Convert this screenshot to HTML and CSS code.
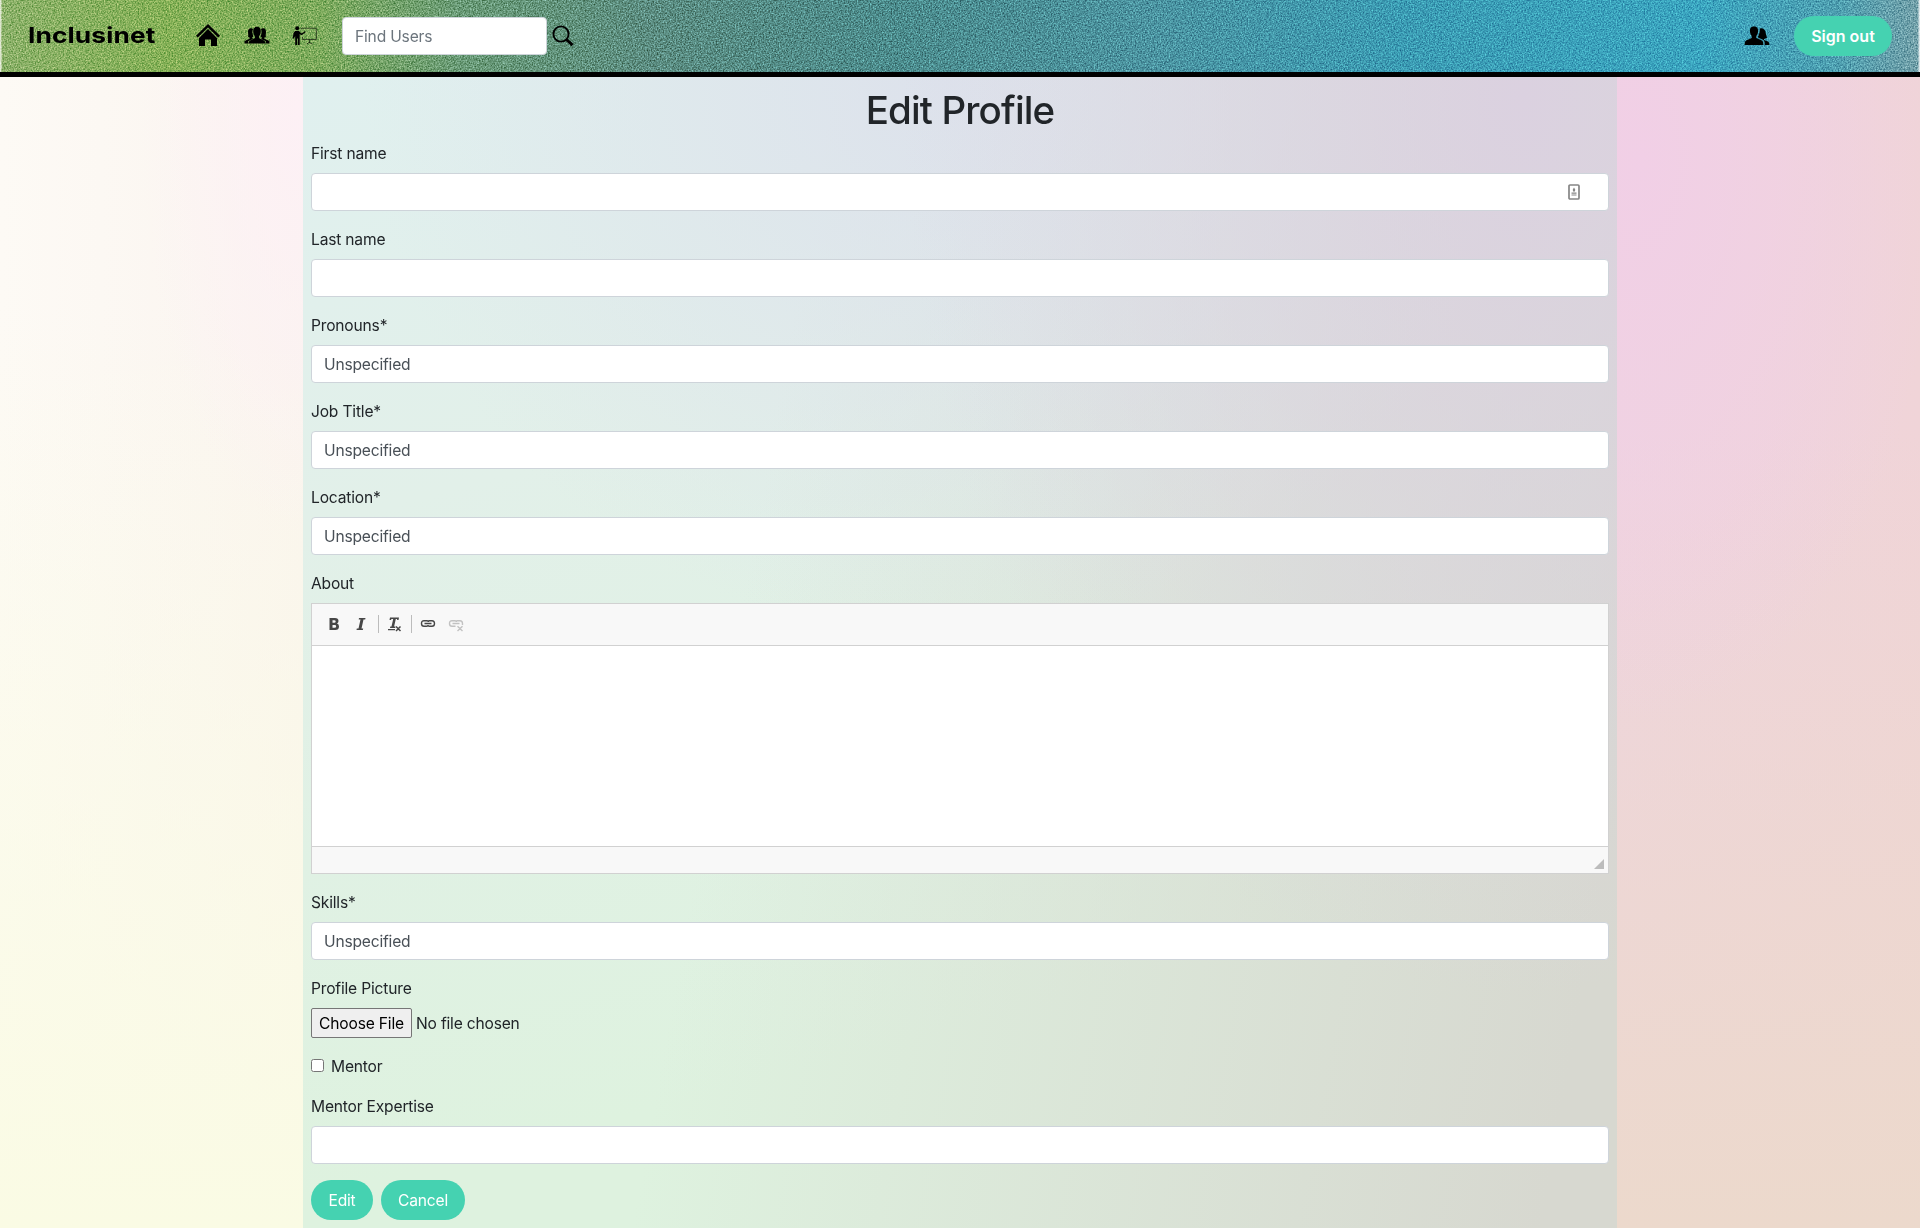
FILE: index.html
```html
<!DOCTYPE html>
<html lang="en">
<head>
<meta charset="utf-8">
<title>Edit Profile - Inclusinet</title>
<link rel="stylesheet" href="styles.css">
</head>
<body>
<header class="navbar">
  <svg class="grain" aria-hidden="true">
    <filter id="grain" x="0" y="0" width="100%" height="100%" color-interpolation-filters="sRGB">
      <feTurbulence type="fractalNoise" baseFrequency="0.68" numOctaves="2" seed="9"/>
      <feColorMatrix values="1.3 0 0 0 -0.15  1.3 0 0 0 -0.15  1.3 0 0 0 -0.15  0 0 0 0 1"/>
    </filter>
    <rect width="100%" height="100%" filter="url(#grain)"/>
  </svg>
  <a class="brand"><span class="brand-text">Inclusinet</span></a>
  <nav class="links">
    <svg width="26" height="24" viewBox="0 0 26 24"><path d="M13 0 25 11.800 23.200 13.600 13 3.600 2.800 13.600 1 11.800Z"/><path d="M13 5 22 14V22H16V15.500H10V22H4V14Z"/></svg>
    <svg width="26" height="20" viewBox="0 0 26 20"><path d="M5.500 2.500C7 1.800 8.500 2.200 9 3 8 5 8.200 8 9.500 10.500L8 11.500C9 12.500 9 13 8 13.500L4 15.200 4.500 17.500H.500V15L5 13C6 12.500 6 12 5.500 11.500L4 11C4.700 9.500 4 8 4 6 4 4.500 4.300 3.200 5.500 2.500ZM20.500 2.500C19 1.800 17.500 2.200 17 3 18 5 17.800 8 16.500 10.500L18 11.500C17 12.500 17 13 18 13.500L22 15.200 21.500 17.500H25.500V15L21 13C20 12.500 20 12 20.500 11.500L22 11C21.300 9.500 22 8 22 6 22 4.500 21.700 3.200 20.500 2.500Z"/><path d="M13 .800C15.500.800 17 2.500 16.800 5.500 16.700 8 15.800 9.500 15 10.300V12L20 14.500Q21.500 15.300 21.500 17.500H4.500Q4.500 15.300 6 14.500L11 12V10.300C10.200 9.500 9.300 8 9.200 5.500 9 2.500 10.500.800 13 .800Z"/></svg>
    <svg width="26" height="22" viewBox="0 0 26 22"><circle cx="5.200" cy="3.200" r="2"/><path d="M3 6H7L9.500 8.500 13 6.300 13.700 7.300 9.500 10.300 7.700 9V20H5.800V13.500H5V20H3.200V11L2 13.500H.700L1.500 8Z"/><path d="M9.500 4.500V3.200H24.300V14.500H10.500V12M17.500 14.500V18M14.500 19 17.500 17.500 20.500 19" fill="none" stroke="#000" stroke-opacity=".75" stroke-width=".8"/></svg>
  </nav>
  <form class="search">
    <input class="control find" placeholder="Find Users">
    <svg width="22" height="22" viewBox="0 0 22 22" fill="none" stroke="#000"><circle cx="9" cy="9" r="7.600" stroke-width="1.900"/><path d="m14.500 14.500 6 5.700" stroke-width="3"/></svg>
  </form>
  <div class="account">
    <svg width="26" height="20" viewBox="0 0 26 20"><path d="M10 .500C13 .500 14.500 2.500 14 6 13.800 8 13 9.300 12.300 10V12L18 14.500Q19.500 15.300 19.500 19H.500Q.500 15.300 2 14.500L7.700 12V10C7 9.300 6.200 8 6 6 5.500 2.500 7 .500 10 .500Z"/><path d="M16 2.500C19.500 1.500 21.500 4 21.700 7L23 12 20 13V14L24 15.500Q25.500 16.300 25.500 19H20.800Q21 15 19 13.800L14.500 11.800C13.500 11.300 14 10.500 14.500 9.500 15.500 7.500 15.800 5 16 2.500Z"/></svg>
    <button class="pill signout">Sign out</button>
  </div>
</header>
<main class="panel">
  <h1>Edit Profile</h1>
  <div class="group"><label>First name</label>
    <div class="autofill"><input class="control">
      <svg class="contact" width="12" height="16" viewBox="0 0 12 16"><rect x="1" y="1" width="10" height="14" rx="1" fill="#fff" stroke="#858585" stroke-width="1.700"/><path d="M6 3.500 7.200 5.500 7 7.500H5L4.800 5.500ZM3.500 8.500H8.500V9.700H3.500ZM3.500 10.500H8.500V11.500H3.500Z" fill="#858585"/></svg>
    </div></div>
  <div class="group"><label>Last name</label><input class="control"></div>
  <div class="group"><label>Pronouns*</label><input class="control" value="Unspecified"></div>
  <div class="group"><label>Job Title*</label><input class="control" value="Unspecified"></div>
  <div class="group"><label>Location*</label><input class="control" value="Unspecified"></div>
  <div class="group"><label>About</label>
    <div class="editor">
      <div class="toolbar">
        <svg width="16" height="16" viewBox="0 0 16 16"><path d="M3.500 2H9Q12.500 2 12.500 5 12.500 6.800 11 7.500 13 8.200 13 10.500 13 14 9.200 14H3.500ZM6.500 4.200V6.800H8.300Q9.700 6.800 9.700 5.500T8.300 4.200ZM6.500 8.900V11.800H8.500Q10.200 11.800 10.200 10.300T8.500 8.900Z" fill-rule="evenodd"/></svg>
        <svg width="16" height="16" viewBox="0 0 16 16"><path d="M6 2H12.500L12.200 3.500H10.500L8.500 12.500H10.200L9.800 14H3.500L3.800 12.500H5.500L7.500 3.500H5.700Z"/></svg>
        <i class="divider"></i>
        <svg width="16" height="16" viewBox="0 0 16 16"><path d="M3 1.500H12L11.500 4H10L10.200 3H8.800L7.100 10.500H8.500L8.200 12H3L3.300 10.500H4.500L6.200 3H4.400L4 4H2.500ZM1 13H8V14.200H1Z"/><path d="m9 10.500 4.500 4.500M13.500 10.500 9 15" stroke="#474747" stroke-width="1.500"/></svg>
        <i class="divider"></i>
        <svg class="link" width="16" height="16" viewBox="0 0 16 16" fill="none" stroke="#474747" stroke-width="1.400"><path d="M7.500 4.700H4Q1.500 4.700 1.500 7.500T4 10.300H6.500Q8 10.300 8.200 9M8.500 4.700H12Q14.500 4.700 14.500 7.500T12 10.300H9.500Q8 10.300 7.800 9M7 4.700Q8.500 4.700 8.500 6M4.500 7.500H11.500"/></svg>
        <svg class="disabled" width="16" height="16" viewBox="0 0 16 16" fill="none" stroke="#474747" stroke-width="1.400"><path d="M7.500 4.700H4Q1.500 4.700 1.500 7.500T4 10.300H7.500M8.500 4.700H12Q14.500 4.700 14.500 7.500V9M7 4.700Q8.500 4.700 8.500 6M4.500 7.500H11.500M9.500 10.300 14.500 15M14.500 10.300 9.500 15"/></svg>
      </div>
      <div class="editable"></div>
      <div class="bottom"><i class="resizer"></i></div>
    </div></div>
  <div class="group"><label>Skills*</label><input class="control" value="Unspecified"></div>
  <div class="group"><label>Profile Picture</label>
    <div class="file"><button class="choose">Choose File</button><span>No file chosen</span></div></div>
  <div class="group check"><input class="box" type="checkbox"><span>Mentor</span></div>
  <div class="group"><label>Mentor Expertise</label><input class="control"></div>
  <div class="actions"><button class="pill edit">Edit</button><button class="pill cancel">Cancel</button></div>
</main>
</body>
</html>
```
FILE: styles.css
```css
* { box-sizing: border-box; }
body {
  margin: 0;
  height: 1228px;
  overflow: hidden;
  font: 15.600px/24px Inter, "Liberation Sans", sans-serif;
  letter-spacing: -0.190px;
  color: #212529;
  background:
    radial-gradient(ellipse 300px 560px at 1640px 160px, #f1cfe6 0, #f1cfe600 100%),
    radial-gradient(ellipse 160px 420px at 300px 110px, #fdf0f5 0, #fdf0f500 100%),
    linear-gradient(180deg, #fafbe400 25%, #fafbe4 100%) 0 0 / 303px 100% no-repeat,
    linear-gradient(180deg, #ecd9cc00 35%, #ecd9cc 100%) 100% 0 / 303px 100% no-repeat,
    linear-gradient(90deg, #fdfaf5 0, #faf4ef 303px, #efd4df 1617px, #f0d4d8 100%);
}
button, input { font: inherit; letter-spacing: inherit; }
.navbar {
  position: relative;
  display: flex;
  align-items: center;
  height: 77px;
  padding: 0 28px;
  border-bottom: 5px solid #000;
  background: linear-gradient(90deg, #dfe8d0 1px, #8ab068 2px, #84b056 170px, #7dab5c 320px, #699a76 460px, #5b8c80 650px, #4b8b8c 900px, #4b93a0 1150px, #3b9bb3 1400px, #3aa4bf 1700px, #4f9fb0 1840px, #719fa8 1918px, #dce8ea 1919px);
}
.grain { position: absolute; inset: 0; width: 100%; height: 100%; mix-blend-mode: overlay; opacity: .6; }
.navbar > :not(.grain) { position: relative; }
.brand { width: 167px; }
.brand-text { display: inline-block; font-weight: 700; font-size: 22px; letter-spacing: 0.100px; color: #000; transform: scaleX(1.195); transform-origin: left; }
.links { display: flex; align-items: center; gap: 22.500px; width: 147px; }
.search { display: flex; align-items: center; gap: 5px; margin: 0; }
.account { display: flex; align-items: center; gap: 24px; margin-left: auto; }
.control {
  display: block;
  width: 100%;
  height: 38px;
  padding: 6px 12px;
  color: #495057;
  background: #fff;
  border: 1px solid #ced4da;
  border-radius: 4px;
}
.control::placeholder { color: #6c757d; }
.find { width: 205px; }
.pill { height: 40px; padding: 1px 0 0; border: 0; border-radius: 20px; background: #45d2b1; color: #fff; }
.signout { width: 98px; padding: 0; font-size: 16px; font-weight: 600; letter-spacing: 0; }
.edit { width: 62px; }
.cancel { width: 84px; }
.panel {
  width: 1314px;
  height: 1151px;
  margin: 0 auto;
  padding: 8px;
  background:
    radial-gradient(ellipse 620px 900px at 1220px 20px, #dbd1e0 0, #dbd1e000 100%),
    radial-gradient(ellipse 580px 560px at 640px 0, #dde2ec 0, #dde2ec00 100%),
    linear-gradient(100deg, #d7d8d000 35%, #d7d8d0 95%),
    linear-gradient(165deg, #e0f0ef 0, #e2f0e9 30%, #def2df 75%);
}
h1 { margin: 0 0 8px; padding-top: 1px; height: 48px; text-align: center; font-size: 38.500px; line-height: 48px; font-weight: 500; letter-spacing: -0.850px; }
.group { margin-bottom: 16px; }
label { height: 24px; padding-top: 1px; display: block; margin-bottom: 8px; }
.autofill { position: relative; }
.contact { position: absolute; right: 29px; top: 11px; }
.editor { height: 271px; border: 1px solid #d1d1d1; background: #fff; display: flex; flex-direction: column; }
.toolbar { display: flex; align-items: center; height: 42px; padding: 0 0 1px 14px; background: #f8f8f8; border-bottom: 1px solid #d1d1d1; fill: #474747; }
.toolbar svg { margin-right: 11px; }
.toolbar .link { margin: 0 12px 0 0; }
.divider { width: 1px; height: 18px; background: #bcbcbc; margin: 0 8px 0 -2px; }
.divider ~ .divider { margin-left: -3px; }
.disabled { opacity: .3; }
.editable { flex: 1; }
.bottom { display: flex; justify-content: flex-end; align-items: flex-end; height: 27px; padding: 0 4px 4px; background: #f8f8f8; border-top: 1px solid #d1d1d1; }
.resizer { border: 5px solid transparent; border-right-color: #bcbcbc; border-bottom-color: #bcbcbc; }
.file { display: flex; align-items: center; gap: 4px; height: 30px; }
.file span { padding-top: 1px; }
.choose { width: 101px; height: 30px; padding: 1px 0 0; border: 1px solid #767676; border-radius: 2px; background: #efefef; color: #000; }
.check { display: flex; gap: 7px; height: 24px; padding-top: 1px; }
.box { width: 13px; height: 13px; margin: 4px 0 0; }
.actions { display: flex; gap: 8px; }
```
